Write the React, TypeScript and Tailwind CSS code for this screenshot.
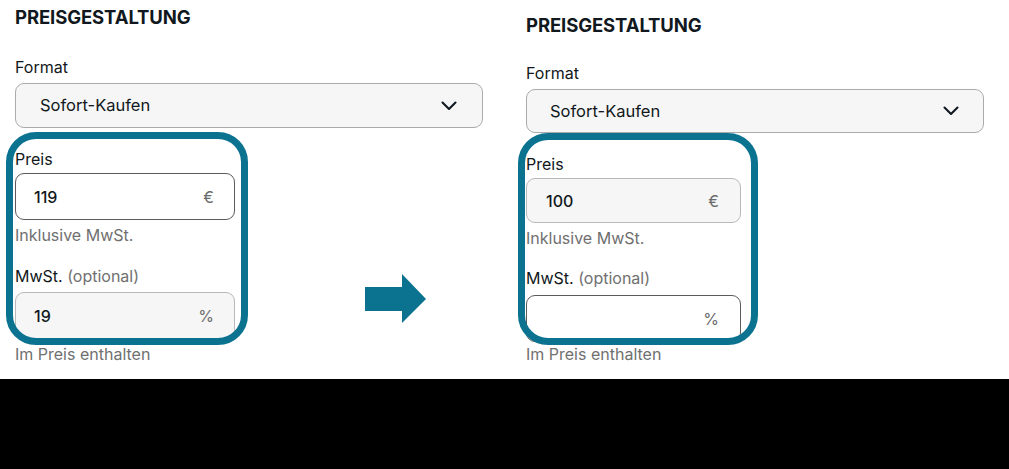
import React from "react";

type Field = { value: string; unit: string; active: boolean };

function Chevron() {
  return (
    <svg width="16" height="10" viewBox="0 0 16 10" fill="none">
      <polyline points="1.5,1.5 8,8 14.5,1.5" stroke="#111820" strokeWidth="2.1" strokeLinecap="round" strokeLinejoin="round" />
    </svg>
  );
}

function Panel({ right }: { right: boolean }) {
  const preis: Field = right ? { value: "100", unit: "€", active: false } : { value: "119", unit: "€", active: true };
  const mwst: Field = right ? { value: "", unit: "%", active: true } : { value: "19", unit: "%", active: false };
  const box = (f: Field, h: string) =>
    `flex items-center justify-between rounded-[9px] border ${h} ${
      f.active ? "border-[#5b5b5b] bg-white" : "border-[#b9b9b9] bg-[#f6f6f6]"
    } ${right ? "w-[215px] pl-[19px] pr-[21px]" : "w-[220px] pl-[18px] pr-[20px]"}`;
  return (
    <div className={`relative flex flex-col ${right ? "w-[458px] pt-[13px]" : "w-[468px] pt-[5px]"}`}>
      <div className="text-[18.5px] leading-[24px] font-bold text-[#111820] tracking-[-0.1px]">PREISGESTALTUNG</div>
      <div className={`text-[16px] leading-[20px] text-[#111820] ${right ? "mt-[26px]" : "mt-[28px]"}`}>Format</div>
      <div
        className={`mt-[6px] flex items-center justify-between rounded-[9px] border border-[#ababab] bg-[#f6f6f6] ${
          right ? "h-[44px] pl-[23px] pr-[24px]" : "h-[45px] pl-[24px] pr-[25px]"
        }`}
      >
        <span className="text-[16.5px] text-[#111820]">Sofort-Kaufen</span>
        <Chevron />
      </div>
      <div className="mt-[21px] text-[16px] leading-[20px] text-[#111820]">Preis</div>
      <div className={`mt-[4px] ${box(preis, right ? "h-[45px]" : "h-[47px]")}`}>
        <span className="text-[16px] font-medium text-[#111820]">{preis.value}</span>
        <span className="text-[16px] text-[#6b6b6b]">{preis.unit}</span>
      </div>
      <div className="mt-[5px] text-[16px] leading-[20px] text-[#707070]">Inklusive MwSt.</div>
      <div className={`text-[16px] leading-[20px] ${right ? "mt-[20px]" : "mt-[21px]"}`}>
        <span className="text-[#111820]">MwSt.</span> <span className="text-[#707070]">(optional)</span>
      </div>
      <div className={`${right ? "mt-[7px]" : "mt-[6px]"} ${box(mwst, "h-[47px]")}`}>
        <span className="text-[16px] font-medium text-[#111820]">{mwst.value}</span>
        <span className="text-[16px] text-[#6b6b6b]">{mwst.unit}</span>
      </div>
      <div className={`text-[16px] leading-[20px] text-[#707070] ${right ? "mt-[2px]" : "mt-[5px]"}`}>Im Preis enthalten</div>
      <div
        className={`pointer-events-none absolute rounded-[30px] border-[7px] border-[#0b7290] ${
          right ? "left-[-8px] top-[133px] h-[212px] w-[240px]" : "left-[-9px] top-[132px] h-[213px] w-[242px]"
        }`}
      />
    </div>
  );
}

export default function App() {
  return (
    <div className="w-[1009px] h-[469px] bg-black" style={{ fontFamily: "Inter, 'Noto Sans', sans-serif" }}>
      <div className="relative flex h-[379px] bg-white pl-[15px]">
        <Panel right={false} />
        <div className="ml-[43px]">
          <Panel right={true} />
        </div>
        <svg className="absolute left-[365px] top-[274px]" width="62" height="50" viewBox="0 0 62 50">
          <polygon points="0,13 37,13 37,0 61,25 37,49 37,37 0,37" fill="#0b7290" />
        </svg>
      </div>
    </div>
  );
}
